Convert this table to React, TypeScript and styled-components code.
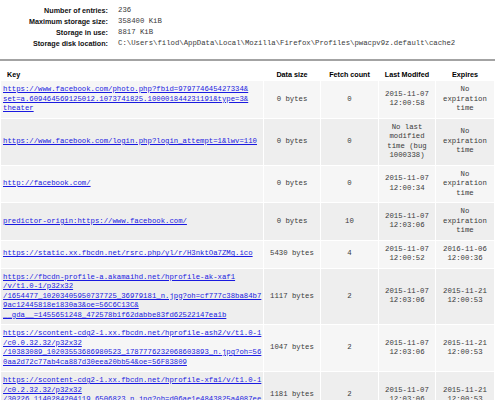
import React from "react";
import styled, { createGlobalStyle } from "styled-components";

const GlobalStyle = createGlobalStyle`
  html, body {
    margin: 0;
    padding: 0;
    background: #ffffff;
  }
  body {
    font-family: "Liberation Sans", Arial, sans-serif;
    color: #000;
  }
`;

const Page = styled.div`
  width: 495px;
  overflow: hidden;
`;

const InfoGrid = styled.div`
  display: grid;
  grid-template-columns: 108px auto;
  column-gap: 10px;
  grid-auto-rows: 11px;
  padding-top: 5px;
  align-items: center;
`;

const InfoLabel = styled.div`
  font-family: "Liberation Sans", Arial, sans-serif;
  font-weight: bold;
  font-size: 7.2px;
  line-height: 11px;
  text-align: right;
  color: #111;
  white-space: nowrap;
`;

const InfoValue = styled.div`
  font-family: "Liberation Mono", "Courier New", monospace;
  font-size: 7.3px;
  line-height: 11px;
  color: #3a3a3a;
  white-space: nowrap;
`;

const Divider = styled.hr`
  margin: 10px 0 5px;
  border: 0;
  height: 2px;
  background: #a3a3a3;
`;

const CacheTable = styled.table`
  width: 495px;
  table-layout: fixed;
  border-collapse: separate;
  border-spacing: 1px;
`;

const HeadCell = styled.th<{ $left?: boolean; $w: number }>`
  box-sizing: border-box;
  width: ${(p) => p.$w}px;
  font-family: "Liberation Sans", Arial, sans-serif;
  font-weight: bold;
  font-size: 7.2px;
  line-height: 10px;
  padding: 3px 2px 0 ${(p) => (p.$left ? "6px" : "2px")};
  text-align: ${(p) => (p.$left ? "left" : "center")};
  color: #000;
  white-space: nowrap;
`;

const Cell = styled.td<{ $dark: boolean; $left?: boolean }>`
  box-sizing: border-box;
  background: ${(p) => (p.$dark ? "#eeeeee" : "#f6f6f6")};
  font-family: "Liberation Mono", "Courier New", monospace;
  font-size: 7.3px;
  line-height: 9.5px;
  padding: 4px 2px;
  vertical-align: middle;
  text-align: ${(p) => (p.$left ? "left" : "center")};
  color: #3a3a3a;
  white-space: nowrap;
  overflow: hidden;
`;

const KeyLink = styled.a`
  color: #1a1ae0;
  text-decoration: underline;
`;

type Row = {
  key: string[];
  size: string;
  count: string;
  modified: string[];
  expires: string[];
};

const noExp = ["No", "expiration", "time"];

const rows: Row[] = [
  {
    key: [
      "https://www.facebook.com/photo.php?fbid=979774645427334&",
      "set=a.609464569125012.1073741825.100001844231191&type=3&",
      "theater",
    ],
    size: "0 bytes",
    count: "0",
    modified: ["2015-11-07", "12:00:58"],
    expires: noExp,
  },
  {
    key: ["https://www.facebook.com/login.php?login_attempt=1&lwv=110"],
    size: "0 bytes",
    count: "0",
    modified: ["No last", "modified", "time (bug", "1000338)"],
    expires: noExp,
  },
  {
    key: ["http://facebook.com/"],
    size: "0 bytes",
    count: "0",
    modified: ["2015-11-07", "12:00:34"],
    expires: noExp,
  },
  {
    key: ["predictor-origin:https://www.facebook.com/"],
    size: "0 bytes",
    count: "10",
    modified: ["2015-11-07", "12:03:06"],
    expires: noExp,
  },
  {
    key: ["https://static.xx.fbcdn.net/rsrc.php/yl/r/H3nktOa7ZMg.ico"],
    size: "5430 bytes",
    count: "4",
    modified: ["2015-11-07", "12:00:52"],
    expires: ["2016-11-06", "12:00:36"],
  },
  {
    key: [
      "https://fbcdn-profile-a.akamaihd.net/hprofile-ak-xaf1",
      "/v/t1.0-1/p32x32",
      "/1654477_10203405950737725_36979181_n.jpg?oh=cf777c38ba84b7",
      "9ac12445818e1830a3&oe=56C6C13C&",
      "__gda__=1455651248_472578b1f62dabbe83fd62522147ea1b",
    ],
    size: "1117 bytes",
    count: "2",
    modified: ["2015-11-07", "12:03:06"],
    expires: ["2015-11-21", "12:00:53"],
  },
  {
    key: [
      "https://scontent-cdg2-1.xx.fbcdn.net/hprofile-ash2/v/t1.0-1",
      "/c0.0.32.32/p32x32",
      "/10383089_10203553686980523_1787776232068603893_n.jpg?oh=56",
      "0aa2d72c77ab4ca887d30eea20bb54&oe=56F83809",
    ],
    size: "1047 bytes",
    count: "2",
    modified: ["2015-11-07", "12:03:06"],
    expires: ["2015-11-21", "12:00:53"],
  },
  {
    key: [
      "https://scontent-cdg2-1.xx.fbcdn.net/hprofile-xfa1/v/t1.0-1",
      "/c0.2.32.32/p32x32",
      "/30226_1140284204119_6506823_n.jpg?oh=d06ae1e4843825a4087ee",
      "b1c5a2e8f0d3&oe=56B1D2A4",
    ],
    size: "1181 bytes",
    count: "2",
    modified: ["2015-11-07", "12:03:06"],
    expires: ["2015-11-21", "12:00:53"],
  },
];

const Lines: React.FC<{ lines: string[] }> = ({ lines }) => (
  <>
    {lines.map((l, i) => (
      <React.Fragment key={i}>
        {i > 0 && <br />}
        {l}
      </React.Fragment>
    ))}
  </>
);

const info: [string, string][] = [
  ["Number of entries:", "236"],
  ["Maximum storage size:", "358400 KiB"],
  ["Storage in use:", "8817 KiB"],
  [
    "Storage disk location:",
    "C:\\Users\\filod\\AppData\\Local\\Mozilla\\Firefox\\Profiles\\pwacpv9z.default\\cache2",
  ],
];

export default function App() {
  return (
    <Page>
      <GlobalStyle />
      <InfoGrid>
        {info.map(([l, v]) => (
          <React.Fragment key={l}>
            <InfoLabel>{l}</InfoLabel>
            <InfoValue>{v}</InfoValue>
          </React.Fragment>
        ))}
      </InfoGrid>
      <Divider />
      <CacheTable>
        <thead>
          <tr>
            <HeadCell $left $w={262}>Key</HeadCell>
            <HeadCell $w={56}>Data size</HeadCell>
            <HeadCell $w={57}>Fetch count</HeadCell>
            <HeadCell $w={56}>Last Modifed</HeadCell>
            <HeadCell $w={58}>Expires</HeadCell>
          </tr>
        </thead>
        <tbody>
          {rows.map((r, i) => {
            const dark = i % 2 === 1;
            return (
              <tr key={i}>
                <Cell $dark={dark} $left>
                  <KeyLink href="#">
                    <Lines lines={r.key} />
                  </KeyLink>
                </Cell>
                <Cell $dark={dark}>{r.size}</Cell>
                <Cell $dark={dark}>{r.count}</Cell>
                <Cell $dark={dark}>
                  <Lines lines={r.modified} />
                </Cell>
                <Cell $dark={dark}>
                  <Lines lines={r.expires} />
                </Cell>
              </tr>
            );
          })}
        </tbody>
      </CacheTable>
    </Page>
  );
}
